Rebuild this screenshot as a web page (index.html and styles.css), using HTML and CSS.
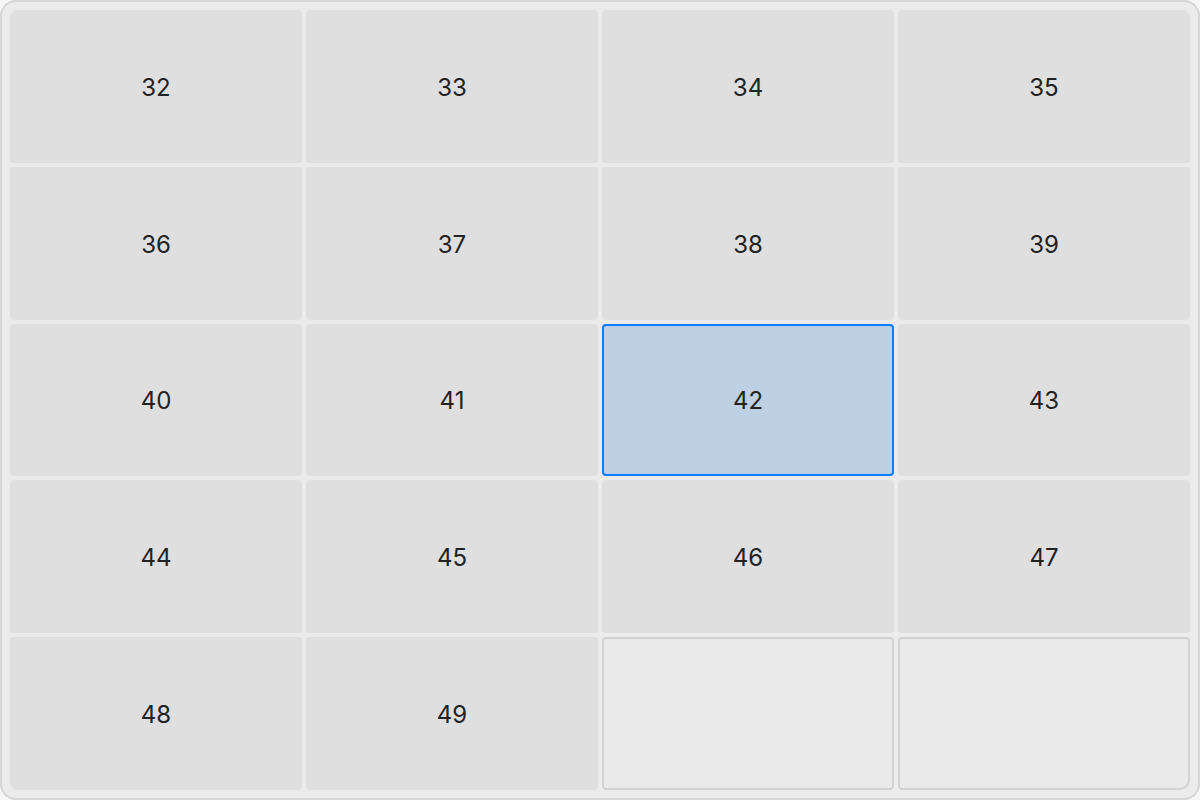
FILE: index.html
```html
<!DOCTYPE html>
<html>
<head>
<meta charset="utf-8">
<link rel="stylesheet" href="styles.css">
</head>
<body>
<div class="board">
  <div class="cell tl">32</div>
  <div class="cell">33</div>
  <div class="cell">34</div>
  <div class="cell tr">35</div>
  <div class="cell">36</div>
  <div class="cell">37</div>
  <div class="cell">38</div>
  <div class="cell">39</div>
  <div class="cell">40</div>
  <div class="cell">41</div>
  <div class="cell selected">42</div>
  <div class="cell">43</div>
  <div class="cell">44</div>
  <div class="cell">45</div>
  <div class="cell">46</div>
  <div class="cell">47</div>
  <div class="cell bl">48</div>
  <div class="cell">49</div>
  <div class="cell empty"></div>
  <div class="cell empty br"></div>
</div>
</body>
</html>
```
FILE: styles.css
```css
html, body {
  margin: 0;
  padding: 0;
  background: #f6f6f6;
}
.board {
  box-sizing: border-box;
  width: 1200px;
  height: 800px;
  border: 2px solid #d6d6d6;
  border-radius: 16px;
  background: #ebebeb;
  padding: 8px;
  display: grid;
  grid-template-columns: repeat(4, 1fr);
  grid-template-rows: repeat(5, 1fr);
  gap: 4px;
}
.cell {
  box-sizing: border-box;
  background: #dfdfdf;
  border-radius: 4px;
  display: flex;
  align-items: center;
  justify-content: center;
  padding-top: 2px;
  font-family: Inter, "Noto Sans", sans-serif;
  font-size: 24px;
  color: #222222;
}
.tl { border-top-left-radius: 8px; }
.tr { border-top-right-radius: 8px; }
.bl { border-bottom-left-radius: 8px; }
.br { border-bottom-right-radius: 10px; }
.selected {
  background: #bdd0e4;
  border: 2px solid #0a7cff;
}
.empty {
  background: #e9e9e9;
  border: 2px solid #d2d2d2;
}
```
